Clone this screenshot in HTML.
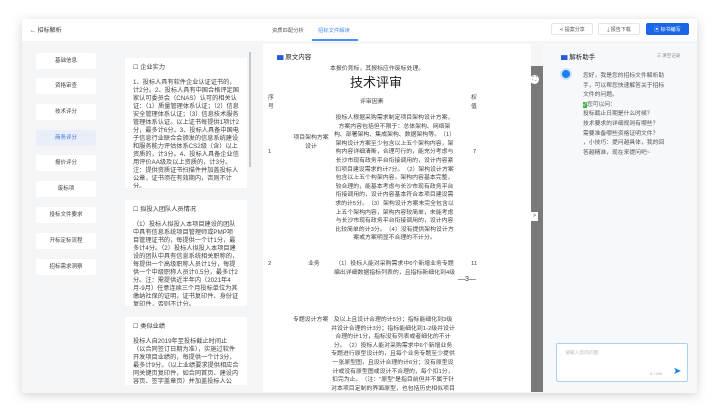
<!DOCTYPE html>
<html><head><meta charset="utf-8"><style>
*{margin:0;padding:0;box-sizing:border-box}
body{width:720px;height:413px;background:#fff;font-family:"Liberation Sans","Noto Sans CJK SC",sans-serif;position:relative;overflow:hidden;color:#333}
.a{position:absolute}
.win{left:22px;top:19px;width:675px;height:374px;background:#f4f5f7;box-shadow:0 2px 10px rgba(0,0,0,.18)}
.hdr{left:22px;top:19px;width:675px;height:22px;background:#fff}
.nav{left:36px;width:60px;height:16px;background:#fff;border-radius:2px;font-size:5.5px;text-align:center;line-height:16px;color:#444}
.card{left:125px;width:122px;background:#fff;font-size:6.2px;line-height:8px;color:#444;padding:6px 8px;overflow:hidden}
.card b{font-weight:normal;display:block;margin-bottom:7px;color:#333}
.t{font-size:5.9px;line-height:8.6px;color:#444}
.btn{top:23px;height:12px;font-size:5px;line-height:12px;text-align:center;border:1px solid #e3e6ea;background:#fff;color:#555;border-radius:2px}
</style></head><body>
<div class="a win"></div>
<div class="a hdr"></div>
<div class="a" style="left:30px;top:25px;font-size:6px;color:#333">← 招标解析</div>
<div class="a" style="left:272px;top:26px;font-size:5.3px;color:#555">资质匹配分析</div>
<div class="a" style="left:318px;top:26px;font-size:5.3px;color:#4a8ef0">招标文件解读</div>
<div class="a" style="left:312px;top:39px;width:46px;height:1.5px;background:#4a8ef0"></div>
<div class="a btn" style="left:551px;width:42px">⋖ 提案分享</div>
<div class="a btn" style="left:598px;width:42px">⤓ 报告下载</div>
<div class="a btn" style="left:646px;width:43px;background:#1a66e8;border-color:#1a66e8;color:#fff">▣ 标书编写</div>

<div class="a nav" style="top:53px">基础信息</div>
<div class="a nav" style="top:78px">资格审查</div>
<div class="a nav" style="top:104px">技术评分</div>
<div class="a nav" style="top:130px;background:#e9eef8;color:#3a6fd8">商务评分</div>
<div class="a nav" style="top:155px">报价评分</div>
<div class="a nav" style="top:181px">废标项</div>
<div class="a nav" style="top:207px">投标文件要求</div>
<div class="a nav" style="top:233px">开标定标流程</div>
<div class="a nav" style="top:259px">招标需求洞察</div>

<div class="a card" style="top:58px;height:130px"><b>☐ 企业实力</b>1、投标人具有软件企业认证证书的，计2分。2、投标人具有中国合格评定国家认可委员会（CNAS）认可的相关认证：（1）质量管理体系认证；（2）信息安全管理体系认证；（3）信息技术服务管理体系认证。以上证书每提供1项计2分，最多计6分。3、投标人具备中国电子信息行业联合会颁发的信息系统建设和服务能力评估体系CS2级（含）以上资质的，计3分。4、投标人具备企业信用评价AA级及以上资质的，计3分。注：提供资质证书扫描件并加盖投标人公章，证书须在有效期内，否则不计分。</div>
<div class="a card" style="top:200px;height:106px"><b>☐ 拟投入团队人员情况</b>（1）投标人拟投入本项目建设的团队中具有信息系统项目管理师或PMP项目管理证书的，每提供一个计1分，最多计4分。（2）投标人拟投入本项目建设的团队中具有信息系统相关职称的，每提供一个高级职称人员计1分，每提供一个中级职称人员计0.5分，最多计2分。注：需提供近半年内（2021年4月-9月）任意连续三个月投标单位为其缴纳社保的证明，证书复印件、身份证复印件，否则不计分。</div>
<div class="a card" style="top:317px;height:68px"><b>☐ 类似业绩</b>投标人自2019年至投标截止时间止（以合同签订日期为准），实施过软件开发项目业绩的，每提供一个计3分，最多计9分。（以上业绩要求提供相应合同关键页复印件，如合同首页、建设内容页、签字盖章页）并加盖投标人公章，未提供不予计分。</div>
<div class="a" style="left:249px;top:52px;width:1.5px;height:115px;background:#c8c8c8"></div>

<div class="a" style="left:263px;top:44px;width:268px;height:348px;background:#fff"></div>
<div class="a" style="left:531px;top:66px;width:12px;height:326px;background:#7a7a7a"></div>
<div class="a" style="left:530px;top:75px;width:9px;height:9px;border-radius:50%;background:#fff;font-size:5px;text-align:center;line-height:9px">⛶</div>
<div class="a" style="left:531px;top:212px;width:7px;height:9px;background:#fff;font-size:5px;line-height:9px;text-align:center">&gt;</div>
<div class="a" style="left:277px;top:51px;font-size:6.5px;color:#222"><span style="color:#2a5bd7">▆</span> 原文内容</div>
<div class="a t" style="left:330px;top:65px">本报价竞标，其报标应作废标处理。</div>
<div class="a" style="left:350px;top:72px;font-size:13px;color:#222">技术评审</div>
<div class="a t" style="left:268px;top:94px;width:7px">序号</div>
<div class="a t" style="left:360px;top:98px">评审因素</div>
<div class="a t" style="left:471px;top:94px;width:7px">权值</div>
<div class="a t" style="left:293px;top:134px;width:36px;text-align:center">项目架构方案设计</div>
<div class="a t" style="left:268px;top:148px">1</div>
<div class="a t" style="left:473px;top:148px">7</div>
<div class="a t" style="left:333px;top:114px;width:123px;text-align:center">投标人根据采购需求制定项目架构设计方案，方案内容包括但不限于：总体架构、网络架构、部署架构、集成架构、数据架构等。（1）架构设计方案至少包含以上五个架构内容，架构内容详细清晰，合理可行的，能充分考虑与长沙市现有政务平台衔接调用的，设计内容紧扣项目建设需求的计7分。（2）架构设计方案包含以上五个构架内容，架构内容基本完整，较合理的，能基本考虑与长沙市现有政务平台衔接调用的，设计内容基本符合本项目建设需求的计5分。（3）架构设计方案未完全包含以上五个架构内容，架构内容较简单，未能考虑与长沙市现有政务平台衔接调用的，设计内容比较简单的计3分。（4）没有提供架构设计方案或方案明显不合理的不计分。</div>
<div class="a t" style="left:268px;top:260px">2</div>
<div class="a t" style="left:308px;top:260px">业务</div>
<div class="a t" style="left:333px;top:260px;width:123px;text-align:center">（1）投标人能对采购需求中6个新增业务专题编出详细数据指标列表的，且指标新细化到4级</div>
<div class="a t" style="left:471px;top:260px">11</div>
<div class="a" style="left:458px;top:276px;font-size:7px;color:#333">—3—</div>
<div class="a t" style="left:293px;top:316px;width:36px">专题设计方案</div>
<div class="a t" style="left:331px;top:316px;width:124px;height:76px;overflow:hidden;text-align:center">及以上且设计合理的计5分；指标能细化到3级并设计合理的计3分；指标能细化到1-2级并设计合理的计1分，指标没有列表或者细化的不计分。（2）投标人能对采购需求中6个新增业务专题进行原型设计的，且每个业务专题至少提供一张原型图，且设计合理的计6分；没有原型设计或没有原型图或设计不合理的，每个扣1分，扣完为止。（注："原型"是指目前但并不属于针对本项目定制的界面原型，也包括历史相似项目原型等可交互展</div>

<div class="a" style="left:543px;top:44px;width:154px;height:349px;background:#f7f8fa"></div>
<div class="a" style="left:561px;top:51px;font-size:6.5px;color:#222"><span style="color:#2a5bd7">▆</span> 解析助手</div>
<div class="a" style="left:657px;top:53px;font-size:4.5px;color:#888">☰ 清空记录</div>
<div class="a" style="left:560px;top:68px;width:12px;height:12px;border-radius:50%;background:#1a7ff0;border:2px solid #cfe3fb"></div>
<div class="a" style="left:583px;top:72px;width:84px;font-size:5.8px;line-height:9.6px;color:#555">您好，我是您的招标文件解析助手，可以帮您快速解答关于招标文件的问题。<br><span style="color:#fff;background:#3bb54a">✓</span>您可以问：<br>投标截止日期是什么时候？<br>技术要求的详细规则有哪些？<br>需要准备哪些资格证明文件？<br>，小技巧：提问越具体，我的回答越精准，现在来提问吧~</div>
<div class="a" style="left:556px;top:343px;width:132px;height:39px;background:#fff;border:1px solid #a9d2f5;border-radius:2px"></div>
<div class="a" style="left:565px;top:349px;font-size:4.8px;color:#bbb">请输入您的问题</div>
<div class="a" style="left:650px;top:371px;font-size:4px;color:#aaa">0 / 200</div>
<div class="a" style="left:673px;top:366px;font-size:10px;color:#1a7ff0">➤</div>
</body></html>
